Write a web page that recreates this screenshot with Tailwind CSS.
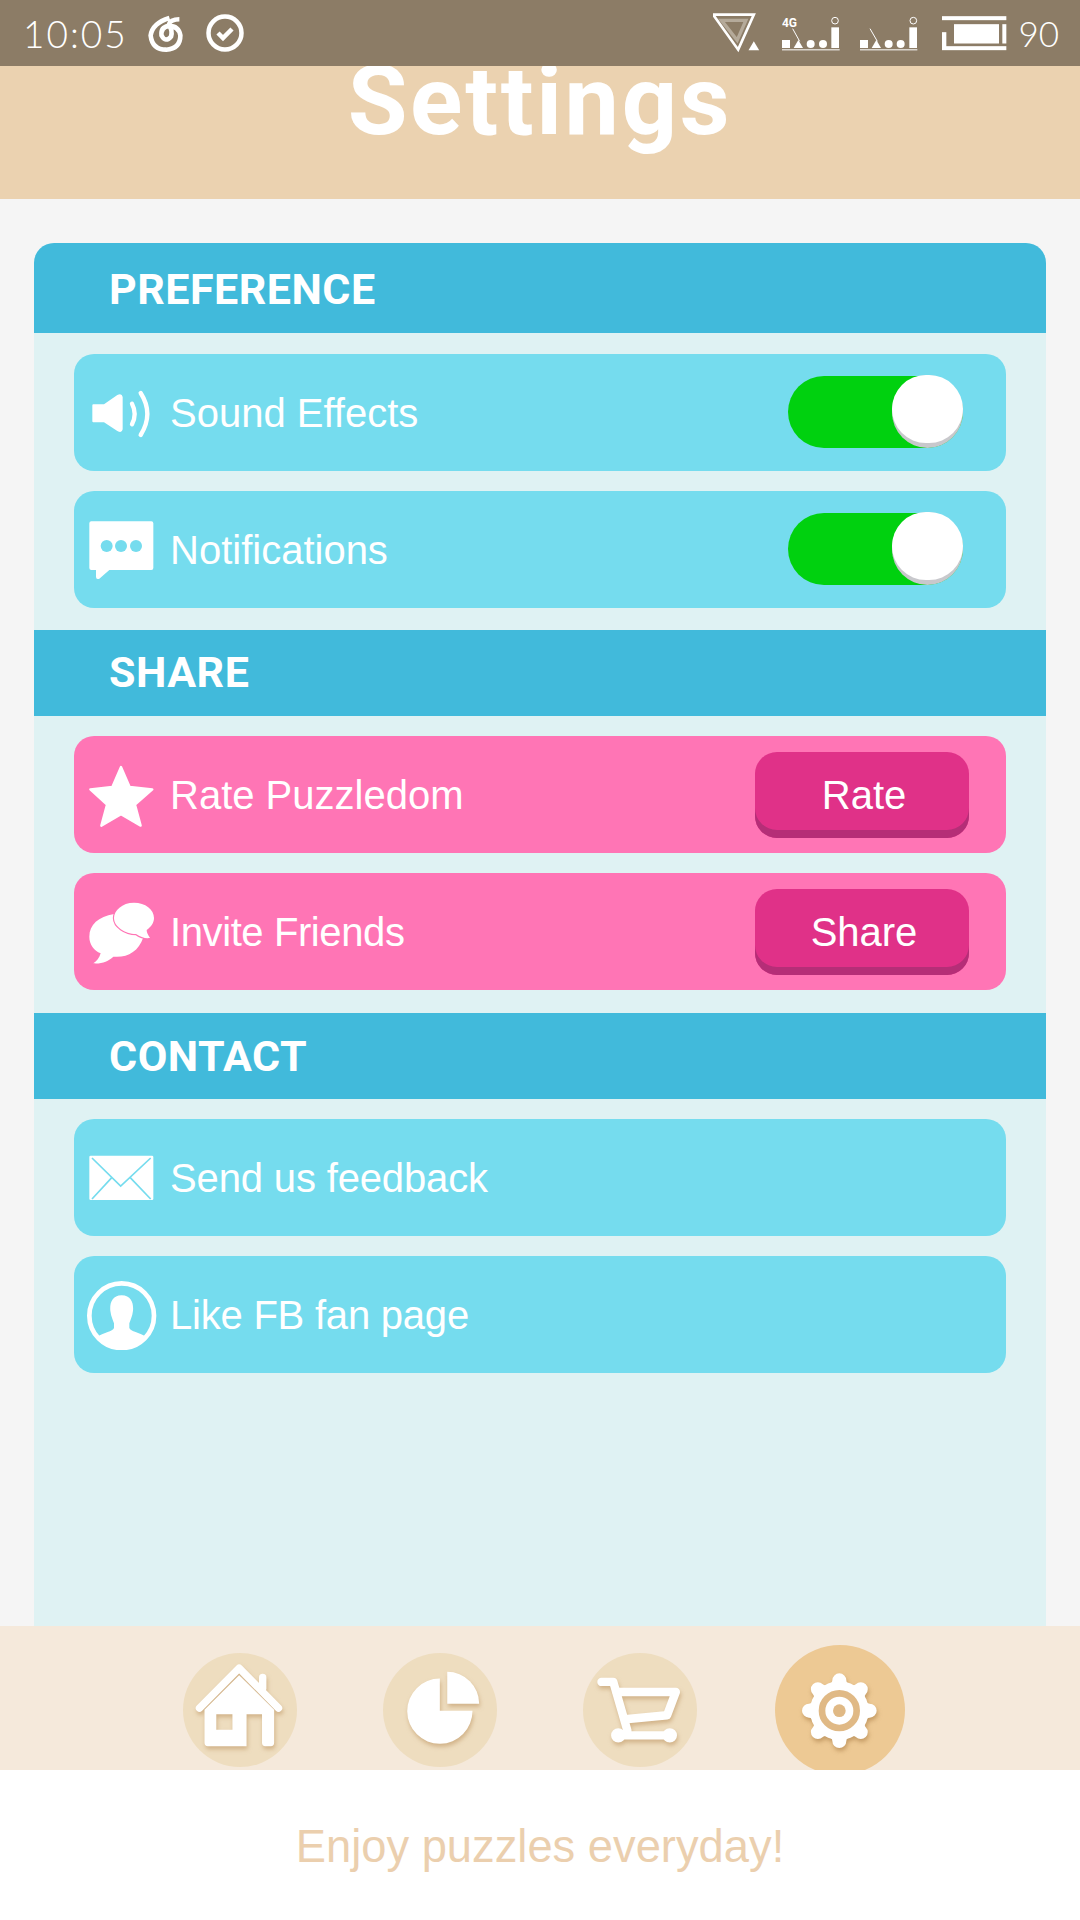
<!DOCTYPE html>
<html lang="en">
<head>
    <meta charset="UTF-8">
    <meta name="viewport" content="width=device-width, initial-scale=1.0">
    <title>Settings</title>
    <script src="https://cdn.jsdelivr.net/npm/@tailwindcss/browser@4"></script>
</head>
<body class="w-[1080px] h-[1920px] overflow-hidden flex flex-col bg-[#f5f5f5] text-white font-['Liberation_Sans',sans-serif]">

    <!-- status bar -->
    <div class="relative z-10 h-[66px] shrink-0 bg-[#8c7c66] flex items-center pl-[23px] pr-[21px]">
        <span class="font-['Lato',sans-serif] font-light text-[37px] leading-none tracking-[2px] w-[124px]">10:05</span>
        <svg class="w-[37px] h-[38px]" viewBox="425 40 110 115" fill="none" stroke="#fff" stroke-width="14">
            <path d="M492 52Q440 68 435 105Q440 148 482 148Q525 145 525 105Q520 76 490 76Q465 80 468 105Q480 128 497 108Q502 90 490 72Q495 56 522 56"/>
        </svg>
        <svg class="w-[38px] h-[38px] ml-[22px]" viewBox="0 0 38 38" fill="none" stroke="#fff">
            <circle cx="19" cy="19" r="16.5" stroke-width="4.5"/>
            <path d="M12 19l5 5 9-9" stroke-width="4.5"/>
        </svg>
        <div class="ml-auto flex items-center">
            <svg class="w-[47px] h-[40px]" viewBox="100 40 140 120" fill="none" stroke="#fff" stroke-width="8">
                <path d="M125 62H198L172 122Z" stroke="#b5aa9a" stroke-width="10"/>
                <path d="M100 45H222L175 150Z"/>
                <path d="M206 152L222 125L238 152Z" fill="#fff" stroke="none"/>
            </svg>
            <svg class="w-[58px] h-[38px] ml-[22px]" viewBox="305 40 174 114">
                <text x="305" y="80" fill="#fff" font-size="36" font-weight="700" font-family="Roboto, sans-serif">4G</text>
                <path d="M337 84L358 122" stroke="#fff" stroke-width="3"/>
                <g fill="#fff">
                    <rect x="305" y="118" width="24" height="24"/>
                    <path d="M340 142L354 118L368 142Z"/>
                    <circle cx="391" cy="130" r="12"/>
                    <circle cx="428" cy="130" r="12"/>
                    <rect x="453" y="80" width="23" height="62"/>
                    <rect x="305" y="146" width="173" height="3"/>
                </g>
                <circle cx="464" cy="60" r="10" fill="none" stroke="#fff" stroke-width="3"/>
            </svg>
            <svg class="w-[58px] h-[38px] ml-[20px]" viewBox="540 40 174 114">
                <path d="M570 84L592 122" stroke="#fff" stroke-width="3"/>
                <g fill="#fff">
                    <rect x="540" y="118" width="24" height="24"/>
                    <path d="M575 142L589 118L603 142Z"/>
                    <circle cx="626" cy="130" r="12"/>
                    <circle cx="662" cy="130" r="12"/>
                    <rect x="688" y="80" width="23" height="62"/>
                    <rect x="540" y="146" width="172" height="3"/>
                </g>
                <circle cx="700" cy="60" r="10" fill="none" stroke="#fff" stroke-width="3"/>
            </svg>
            <svg class="w-[65px] h-[35px] ml-[24px]" viewBox="785 48 195 104" fill="#fff">
                <rect x="785" y="48" width="193" height="12"/>
                <rect x="785" y="138" width="193" height="12"/>
                <rect x="785" y="96" width="13" height="50"/>
                <rect x="966" y="72" width="12" height="58"/>
                <rect x="821" y="72" width="135" height="58"/>
            </svg>
            <span class="font-['Lato',sans-serif] font-light text-[35px] leading-none ml-[11px]">90</span>
        </div>
    </div>

    <!-- title -->
    <div class="h-[133px] shrink-0 bg-[#ebd2b0] flex justify-center">
        <h1 class="font-['Roboto',sans-serif] font-bold text-[97px] tracking-[2.7px] leading-none mt-[-13px]">Settings</h1>
    </div>

    <!-- panel -->
    <div class="h-[1427px] shrink-0 pt-[44px] px-[34px] flex flex-col">
        <div class="flex-1 bg-[#dff2f3] rounded-t-[20px] flex flex-col">
            <div class="h-[90px] shrink-0 bg-[#41badb] rounded-t-[20px] flex items-center pl-[75px] pt-[2px] font-['Roboto',sans-serif] font-bold text-[43px] tracking-[0.5px]">PREFERENCE</div>

            <div class="flex flex-col gap-[20px] px-[40px] pt-[21px] pb-[22px]">
                <div class="h-[117px] rounded-[20px] bg-[#75dcee] flex items-center pl-[13px] gap-[13px] text-[40px]">
                    <svg class="w-[70px] h-[70px]" viewBox="171 411 210 210" fill="#fff">
                        <path d="M190 490H222L262 462Q276 456 278 468V565Q276 578 262 570L222 544H190Q187 544 187 541V493Q187 490 190 490Z"/>
                        <path d="M306 488Q322 518 306 550M332 456Q372 518 332 582" fill="none" stroke="#fff" stroke-width="13" stroke-linecap="round"/>
                    </svg>
                    <span>Sound Effects</span>
                    <div class="relative ml-auto mr-[43px] mb-[1px] w-[175px] h-[72px] rounded-full bg-[#00d10f]">
                        <div class="absolute right-0 top-[-1px] w-[71px] h-[73px] rounded-full bg-[#c8c8cc]"></div>
                        <div class="absolute right-0 top-[-1px] w-[71px] h-[68px] rounded-full bg-white"></div>
                    </div>
                </div>
                <div class="h-[117px] rounded-[20px] bg-[#75dcee] flex items-center pl-[13px] gap-[13px] text-[40px]">
                    <svg class="w-[70px] h-[70px]" viewBox="171 823 210 210" fill="#fff">
                        <path d="M184 842H364Q370 842 370 848V982Q370 988 364 988H238L208 1014Q198 1018 198 1008V988H184Q178 988 178 982V848Q178 842 184 842Z"/>
                        <g fill="#75dcee">
                            <circle cx="230" cy="916" r="18"/>
                            <circle cx="273" cy="916" r="18"/>
                            <circle cx="318" cy="916" r="18"/>
                        </g>
                    </svg>
                    <span>Notifications</span>
                    <div class="relative ml-auto mr-[43px] mb-[1px] w-[175px] h-[72px] rounded-full bg-[#00d10f]">
                        <div class="absolute right-0 top-[-1px] w-[71px] h-[73px] rounded-full bg-[#c8c8cc]"></div>
                        <div class="absolute right-0 top-[-1px] w-[71px] h-[68px] rounded-full bg-white"></div>
                    </div>
                </div>
            </div>

            <div class="h-[86px] shrink-0 bg-[#41badb] flex items-center pl-[75px] pb-[1px] font-['Roboto',sans-serif] font-bold text-[43px] tracking-[0.5px]">SHARE</div>

            <div class="flex flex-col gap-[20px] px-[40px] pt-[20px] pb-[23px]">
                <div class="h-[117px] rounded-[20px] bg-[#ff75b5] flex items-center pl-[13px] gap-[13px] text-[40px]">
                    <svg class="w-[70px] h-[70px]" viewBox="171 118 210 210" fill="#fff" stroke="#fff" stroke-width="7" stroke-linejoin="round">
                        <path d="M273 139L299 199L367 206L315 252L332 315L273 281L214 315L231 252L181 206L247 199Z"/>
                    </svg>
                    <span>Rate Puzzledom</span>
                    <button class="ml-auto mr-[37px] w-[214px] h-[86px] rounded-[22px] bg-[#e03188] shadow-[inset_0_-8px_0_#b52e77] pl-[4px] text-[40px]">Rate</button>
                </div>
                <div class="h-[117px] rounded-[20px] bg-[#ff75b5] flex items-center pl-[13px] gap-[13px] text-[40px]">
                    <svg class="w-[70px] h-[70px]" viewBox="171 529 210 210" fill="#fff">
                        <path d="M252 580C205 588 178 612 178 648C178 672 192 690 212 698C208 712 200 722 190 728C215 730 235 722 250 708C290 712 325 695 340 650Z"/>
                        <path d="M312 546C276 546 252 570 252 592C252 618 285 640 318 640C332 650 346 654 360 652C354 642 350 636 350 628C364 618 372 606 372 592C372 566 346 546 312 546Z" stroke="#ff75b5" stroke-width="7" paint-order="stroke"/>
                    </svg>
                    <span class="tracking-[-0.4px]">Invite Friends</span>
                    <button class="ml-auto mr-[37px] w-[214px] h-[86px] rounded-[22px] bg-[#e03188] shadow-[inset_0_-8px_0_#b52e77] pl-[4px] text-[40px]">Share</button>
                </div>
            </div>

            <div class="h-[86px] shrink-0 bg-[#41badb] flex items-center pl-[75px] font-['Roboto',sans-serif] font-bold text-[43px] tracking-[0.5px]">CONTACT</div>

            <div class="flex flex-col gap-[20px] px-[40px] pt-[20px]">
                <div class="h-[117px] rounded-[20px] bg-[#75dcee] flex items-center pl-[13px] gap-[13px] text-[40px]">
                    <svg class="w-[70px] h-[70px]" viewBox="171 127 210 210">
                        <rect x="178" y="165" width="192" height="133" rx="4" fill="#fff"/>
                        <path d="M186 172L272 256L362 172M186 295L246 230M362 295L300 230" fill="none" stroke="#75dcee" stroke-width="5"/>
                    </svg>
                    <span class="tracking-[-0.15px]">Send us feedback</span>
                </div>
                <div class="h-[117px] rounded-[20px] bg-[#75dcee] flex items-center pl-[13px] gap-[13px] text-[40px]">
                    <svg class="w-[70px] h-[70px]" viewBox="171 538 210 210" fill="#fff">
                        <circle cx="275" cy="645" r="97" fill="none" stroke="#fff" stroke-width="14"/>
                        <path d="M275 584C305 584 311 610 309 630C307 648 300 660 298 668V682C302 692 328 696 348 708A97 97 0 0 1 202 708C222 696 248 692 252 682V668C250 660 243 648 241 630C239 610 245 584 275 584Z"/>
                    </svg>
                    <span class="tracking-[-0.22px]">Like FB fan page</span>
                </div>
            </div>
        </div>
    </div>

    <!-- bottom nav -->
    <div class="absolute left-0 top-[1626px] w-[1080px] h-[144px] bg-[#f5e9db] overflow-hidden flex justify-center">
        <div class="w-[200px] flex justify-center pt-[27px]">
            <div class="w-[114px] h-[114px] rounded-full bg-[#eeddbf]">
                <svg class="w-[114px] h-[114px] drop-shadow-[1px_3px_2px_rgba(190,150,100,0.6)]" viewBox="69 131 339 339" fill="#fff">
                    <path fill-rule="evenodd" d="M133 300L236 197L340 300V398Q340 408 330 408H314Q304 408 304 398V313H258V408H143Q133 408 133 398ZM168 313V359H216V313Z"/>
                    <path d="M118 295L236 176L353 295" fill="none" stroke="#fff" stroke-width="22" stroke-linecap="round" stroke-linejoin="round"/>
                    <path d="M306 204V236" fill="none" stroke="#fff" stroke-width="22" stroke-linecap="round"/>
                </svg>
            </div>
        </div>
        <div class="w-[200px] flex justify-center pt-[27px]">
            <div class="w-[114px] h-[114px] rounded-full bg-[#eeddbf]">
                <svg class="w-[114px] h-[114px] drop-shadow-[1px_3px_2px_rgba(190,150,100,0.6)]" viewBox="669 131 339 339" fill="#fff">
                    <path d="M838 207A97 97 0 1 0 935 303H838Z"/>
                    <path d="M860 187A95 95 0 0 1 955 282H860Z"/>
                </svg>
            </div>
        </div>
        <div class="w-[200px] flex justify-center pt-[27px]">
            <div class="w-[114px] h-[114px] rounded-full bg-[#eeddbf]">
                <svg class="w-[114px] h-[114px] drop-shadow-[1px_3px_2px_rgba(190,150,100,0.6)]" viewBox="100 131 339 339" fill="none" stroke="#fff" stroke-width="25" stroke-linecap="round" stroke-linejoin="round">
                    <path d="M155 217H190L232 362"/>
                    <path d="M200 247H376L350 316L226 328"/>
                    <path d="M205 376H358"/>
                    <circle cx="205" cy="376" r="9" fill="#fff"/>
                    <circle cx="358" cy="376" r="9" fill="#fff"/>
                </svg>
            </div>
        </div>
        <div class="w-[200px] flex justify-center pt-[19px]">
            <div class="w-[130px] h-[130px] shrink-0 rounded-full bg-[#edc994]">
                <svg class="w-[130px] h-[130px] drop-shadow-[1px_3px_2px_rgba(170,125,70,0.6)]" viewBox="680 105 390 390" fill="#fff">
                    <circle cx="873" cy="302" r="88"/>
                    <path d="M835 225Q852 222 852 211A21 21 0 0 1 894 211Q894 222 911 225Z"/>
                    <path transform="rotate(45 873 302)" d="M835 225Q852 222 852 211A21 21 0 0 1 894 211Q894 222 911 225Z"/>
                    <path transform="rotate(90 873 302)" d="M835 225Q852 222 852 211A21 21 0 0 1 894 211Q894 222 911 225Z"/>
                    <path transform="rotate(135 873 302)" d="M835 225Q852 222 852 211A21 21 0 0 1 894 211Q894 222 911 225Z"/>
                    <path transform="rotate(180 873 302)" d="M835 225Q852 222 852 211A21 21 0 0 1 894 211Q894 222 911 225Z"/>
                    <path transform="rotate(225 873 302)" d="M835 225Q852 222 852 211A21 21 0 0 1 894 211Q894 222 911 225Z"/>
                    <path transform="rotate(270 873 302)" d="M835 225Q852 222 852 211A21 21 0 0 1 894 211Q894 222 911 225Z"/>
                    <path transform="rotate(315 873 302)" d="M835 225Q852 222 852 211A21 21 0 0 1 894 211Q894 222 911 225Z"/>
                    <circle cx="873" cy="302" r="52" stroke="#e0b985" stroke-width="20"/>
                    <circle cx="873" cy="302" r="19" fill="#e0b985"/>
                </svg>
            </div>
        </div>
    </div>

    <!-- footer -->
    <div class="absolute left-0 top-[1770px] w-[1080px] h-[150px] bg-white flex items-center justify-center pt-[4px] text-[45.3px] text-[#ebcfae]">Enjoy puzzles everyday!</div>

</body>
</html>
